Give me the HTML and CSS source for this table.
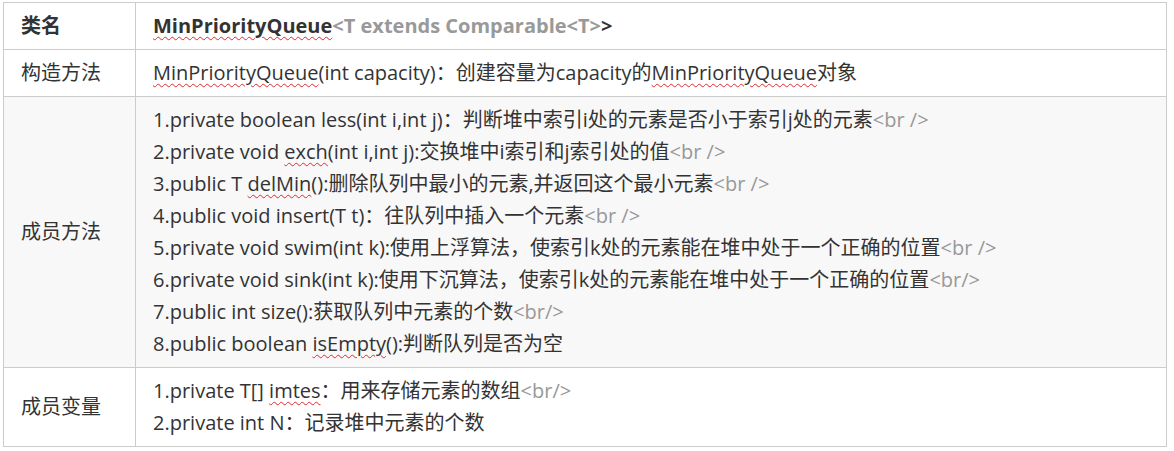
FILE: index.html
```html
<!DOCTYPE html>
<html lang="zh-CN">

<head>
    <meta charset="UTF-8">
    <meta name="viewport" content="width=device-width, initial-scale=1.0">
    <title>MinPriorityQueue</title>

    <link rel="stylesheet" href="styles.css">
</head>

<body>
    <table class="api-table">
        <tr class="head">
            <td class="label">类名</td>
            <td><span class="typo">MinPriorityQueue</span><span class="tag">&lt;T extends Comparable&lt;T&gt;</span>&gt;</td>
        </tr>
        <tr>
            <td class="label">构造方法</td>
            <td><span class="typo">MinPriorityQueue</span>(int capacity)：创建容量为capacity的<span class="typo">MinPriorityQueue</span>对象</td>
        </tr>
        <tr class="shaded">
            <td class="label">成员方法</td>
            <td>
                <div>1.private boolean less(int i,int j)：判断堆中索引i处的元素是否小于索引j处的元素<span class="tag">&lt;br /&gt;</span></div>
                <div>2.private void <span class="typo">exch</span>(int i,int j):交换堆中i索引和j索引处的值<span class="tag">&lt;br /&gt;</span></div>
                <div>3.public T <span class="typo">delMin</span>():删除队列中最小的元素,并返回这个最小元素<span class="tag">&lt;br /&gt;</span></div>
                <div>4.public void insert(T t)：往队列中插入一个元素<span class="tag">&lt;br /&gt;</span></div>
                <div>5.private void swim(int k):使用上浮算法，使索引k处的元素能在堆中处于一个正确的位置<span class="tag">&lt;br /&gt;</span></div>
                <div>6.private void sink(int k):使用下沉算法，使索引k处的元素能在堆中处于一个正确的位置<span class="tag">&lt;br/&gt;</span></div>
                <div>7.public int size():获取队列中元素的个数<span class="tag">&lt;br/&gt;</span></div>
                <div>8.public boolean <span class="typo">isEmpty</span>():判断队列是否为空</div>
            </td>
        </tr>
        <tr>
            <td class="label">成员变量</td>
            <td>
                <div>1.private T[] <span class="typo">imtes</span>：用来存储元素的数组<span class="tag">&lt;br/&gt;</span></div>
                <div>2.private int N：记录堆中元素的个数</div>
            </td>
        </tr>
    </table>
</body>

</html>
```

FILE: styles.css
```css
body {
    margin: 0;
    padding: 2px 0 0 3px;
    background: #ffffff;
    color: #333333;
    font-family: "Open Sans", "Noto Sans CJK SC", sans-serif;
    font-size: 20px;
    line-height: 32px;
}

.api-table {
    width: 1164px;
    border-collapse: collapse;
}

.api-table td {
    border: 1px solid #cccccc;
    padding: 7px 18px 7px 17px;
    vertical-align: middle;
}

.api-table .label {
    width: 96px;
}

.api-table .head td {
    font-weight: 700;
    height: 31px;
}

.api-table .shaded td {
    background-color: #f8f8f8;
}

/* 灰色的标签文字 */
.tag {
    color: #999999;
    font-weight: 400;
}

.head .tag {
    font-weight: 700;
}

/* 拼写检查的红色波浪线 */
.typo {
    text-decoration: underline wavy #e0282d;
    text-decoration-thickness: 1px;
    text-underline-offset: 3px;
}
```
